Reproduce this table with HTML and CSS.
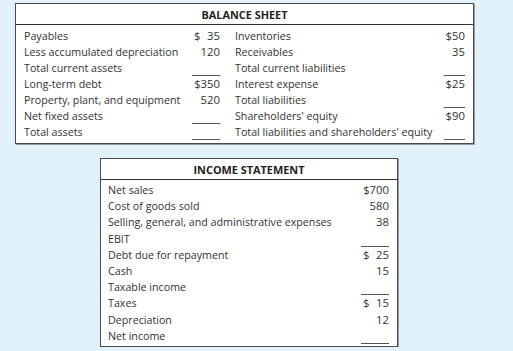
FILE: index.html
```html
<!DOCTYPE html>
<html>
<head>
<meta charset="utf-8">
<link rel="stylesheet" href="styles.css">
</head>
<body>
<div class="page">
  <section class="box balance">
    <header class="head">BALANCE SHEET</header>
    <div class="grid bs-grid">
      <div class="lbl">Payables</div><div class="val split"><span>$</span><span>35</span></div>
      <div class="lbl r">Inventories</div><div class="val">$50</div>

      <div class="lbl">Less accumulated depreciation</div><div class="val">120</div>
      <div class="lbl r">Receivables</div><div class="val">35</div>

      <div class="lbl">Total current assets</div><div class="val line"></div>
      <div class="lbl r">Total current liabilities</div><div class="val line"></div>

      <div class="lbl">Long-term debt</div><div class="val">$350</div>
      <div class="lbl r">Interest expense</div><div class="val">$25</div>

      <div class="lbl">Property, plant, and equipment</div><div class="val">520</div>
      <div class="lbl r">Total liabilities</div><div class="val line"></div>

      <div class="lbl">Net fixed assets</div><div class="val line"></div>
      <div class="lbl r">Shareholders' equity</div><div class="val">$90</div>

      <div class="lbl">Total assets</div><div class="val line"></div>
      <div class="lbl r">Total liabilities and shareholders' equity</div><div class="val line"></div>
    </div>
  </section>

  <section class="box income">
    <header class="head">INCOME STATEMENT</header>
    <div class="grid is-grid">
      <div class="lbl">Net sales</div><div class="val">$700</div>
      <div class="lbl">Cost of goods sold</div><div class="val">580</div>
      <div class="lbl">Selling, general, and administrative expenses</div><div class="val">38</div>
      <div class="lbl">EBIT</div><div class="val line"></div>
      <div class="lbl">Debt due for repayment</div><div class="val split"><span>$</span><span>25</span></div>
      <div class="lbl">Cash</div><div class="val">15</div>
      <div class="lbl">Taxable income</div><div class="val line"></div>
      <div class="lbl">Taxes</div><div class="val split"><span>$</span><span>15</span></div>
      <div class="lbl">Depreciation</div><div class="val">12</div>
      <div class="lbl">Net income</div><div class="val line"></div>
    </div>
  </section>
</div>
</body>
</html>
```
FILE: styles.css
```css
html, body {
  margin: 0;
  padding: 0;
  background: #e1f2fa;
}
body {
  font-family: "Open Sans", "Liberation Sans", sans-serif;
  font-size: 10.7px;
  color: #333;
}
.page {
  padding: 3px 0 0 15px;
  display: flex;
  flex-direction: column;
  align-items: flex-start;
}
.box {
  background: #fff;
  border: 1px solid #4a4a4a;
  box-shadow: 1px 1px 0 #9a9a9a;
}
.head {
  height: 20px;
  line-height: 21px;
  text-align: center;
  font-weight: 700;
  font-size: 10.9px;
  color: #222;
  border-bottom: 1px solid #333;
}
.grid {
  display: grid;
}
.bs-grid {
  grid-template-columns: 168px 28px 224px 21px;
  grid-auto-rows: 16px;
  padding: 3px 8px 3px 8px;
}
.is-grid {
  grid-template-columns: 253px 28px;
  grid-auto-rows: 16.2px;
  padding: 2px 8px 2px 7px;
}
.income {
  margin: 14px 0 0 85px;
}
.lbl {
  line-height: 16px;
  white-space: nowrap;
}
.lbl.r {
  padding-left: 15px;
}
.val {
  line-height: 16px;
  font-size: 11.3px;
  text-align: right;
  white-space: nowrap;
}
.val.split {
  display: flex;
  justify-content: space-between;
  padding-left: 2px;
}
.val.line {
  border-bottom: 1px solid #555;
  height: 15px;
}
```
